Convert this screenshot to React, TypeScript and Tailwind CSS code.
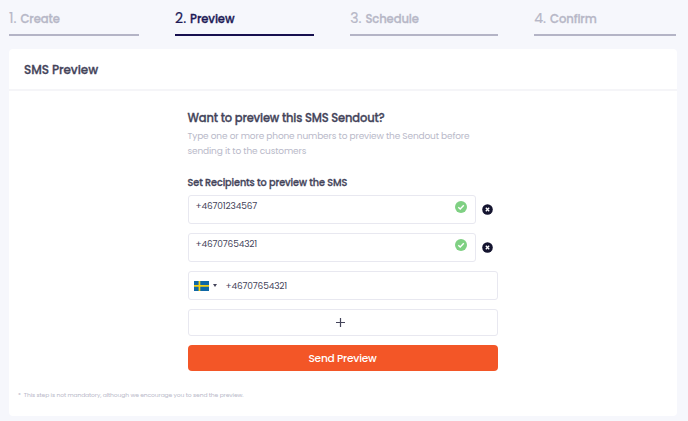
import React from 'react';

interface Step {
  number: number;
  label: string;
  active?: boolean;
  width: string;
}

const steps: Step[] = [
  { number: 1, label: 'Create', width: 'w-[130px]' },
  { number: 2, label: 'Preview', active: true, width: 'w-[139px]' },
  { number: 3, label: 'Schedule', width: 'w-[148px]' },
  { number: 4, label: 'Confirm', width: 'w-[142px]' },
];

const recipients = ['+46701234567', '+46707654321'];

const StepTab: React.FC<{ step: Step }> = ({ step }) => (
  <div
    className={`${step.width} flex h-[27px] shrink-0 items-start gap-[4px] whitespace-nowrap border-b-2 ${
      step.active ? 'border-[#17104f] text-[#201a56]' : 'border-[#b4b4c6] text-[#b7b7c7]'
    }`}
  >
    <span className="text-[14px] leading-[18px] [-webkit-text-stroke:0.2px]">{step.number}.</span>
    <span className="pt-px text-[11.6px] font-medium leading-[18px] tracking-[-0.1px] [-webkit-text-stroke:0.3px]">
      {step.label}
    </span>
  </div>
);

const CheckIcon = () => (
  <svg className="h-3 w-3" viewBox="0 0 12 12">
    <circle cx="6" cy="6" r="6" fill="#7fd083" />
    <path d="M3.3 6.2 5.2 8 8.8 4.2" fill="none" stroke="#fff" strokeWidth="1.4" />
  </svg>
);

const RemoveIcon = () => (
  <svg className="h-[11px] w-[11px]" viewBox="0 0 11 11">
    <circle cx="5.5" cy="5.5" r="5.3" fill="#14142f" />
    <path d="m3.8 3.8 3.4 3.4M7.2 3.8 3.8 7.2" stroke="#fff" strokeWidth="1.3" />
  </svg>
);

const SwedishFlag = () => (
  <svg className="h-[10px] w-[15px]" viewBox="0 0 15 10">
    <path d="M0 0h15v10H0z" fill="#0e68a6" />
    <path d="M4.6 0h1.7v10H4.6zM0 4.1h15v1.7H0z" fill="#f2cf16" />
  </svg>
);

const App: React.FC = () => {
  return (
    <div className="h-[421px] w-[688px] overflow-hidden bg-[#f6f7fc] pl-[9px] pt-[9px] font-['Poppins','Inter',sans-serif] text-[#44445a]">
      <nav className="flex gap-[36.1px]">
        {steps.map((step) => (
          <StepTab key={step.number} step={step} />
        ))}
      </nav>

      <main className="mt-[13px] flex h-[367px] w-[667.5px] flex-col rounded bg-white">
        <header className="flex h-[42px] shrink-0 items-center border-b-2 border-[#f5f5f8] pl-[15px] pt-px">
          <h1 className="text-[12px] font-medium leading-[18px] tracking-[-0.07px] [-webkit-text-stroke:0.3px]">SMS Preview</h1>
        </header>

        <section className="ml-[178.5px] w-[310px] pt-[18px]">
          <h2 className="text-[11.5px] font-medium leading-[18px] tracking-[-0.17px] [-webkit-text-stroke:0.3px]">
            Want to preview this SMS Sendout?
          </h2>
          <p className="mt-[2px] whitespace-nowrap text-[9px] leading-[14.5px] tracking-[-0.15px] text-[#b9b9c9]">
            Type one or more phone numbers to preview the Sendout before
            <br />
            sending it to the customers
          </p>
          <h3 className="mt-[18px] text-[9.7px] font-medium leading-[14px] tracking-[-0.1px] [-webkit-text-stroke:0.3px]">
            Set Recipients to preview the SMS
          </h3>

          <div className="mt-[5px] flex flex-col gap-[9px]">
            {recipients.map((phone) => (
              <div key={phone} className="flex items-center">
                <div className="flex h-[29px] w-[288px] items-start justify-between rounded-[3px] border border-[#e8e8f0] pl-[7px] pr-[8px] pt-[5px]">
                  <span className="-mt-px text-[9px] leading-[12px] tracking-[-0.15px]">{phone}</span>
                  <CheckIcon />
                </div>
                <button className="ml-[6px]" aria-label="Remove">
                  <RemoveIcon />
                </button>
              </div>
            ))}

            <div className="flex h-[29px] items-center rounded-[3px] border border-[#e8e8f0] pl-[5px]">
              <SwedishFlag />
              <svg className="ml-[4px] h-[3px] w-1" viewBox="0 0 4 3">
                <path d="M0 0h4L2 3z" fill="#44445a" />
              </svg>
              <span className="ml-[9px] text-[9px] leading-[12px] tracking-[-0.15px]">+46707654321</span>
            </div>

            <button className="flex h-[27px] items-center justify-center rounded-[3px] border border-[#e8e8f0] pr-[4px]" aria-label="Add">
              <svg className="h-[9px] w-[9px]" viewBox="0 0 9 9">
                <path d="M4.5 0v9M0 4.5h9" stroke="#44445a" strokeWidth="1.2" />
              </svg>
            </button>

            <button className="h-[26px] rounded bg-[#f35627] pt-px text-[10.6px] font-medium tracking-[-0.23px] text-white">
              Send Preview
            </button>
          </div>
        </section>

        <footer className="ml-[9px] mt-[19px] flex gap-[3px] text-[6px] leading-[10px] tracking-[-0.12px] text-[#b9b9c9]">
          <span>*</span>
          <span>This step is not mandatory, although we encourage you to send the preview.</span>
        </footer>
      </main>
    </div>
  );
};

export default App;
